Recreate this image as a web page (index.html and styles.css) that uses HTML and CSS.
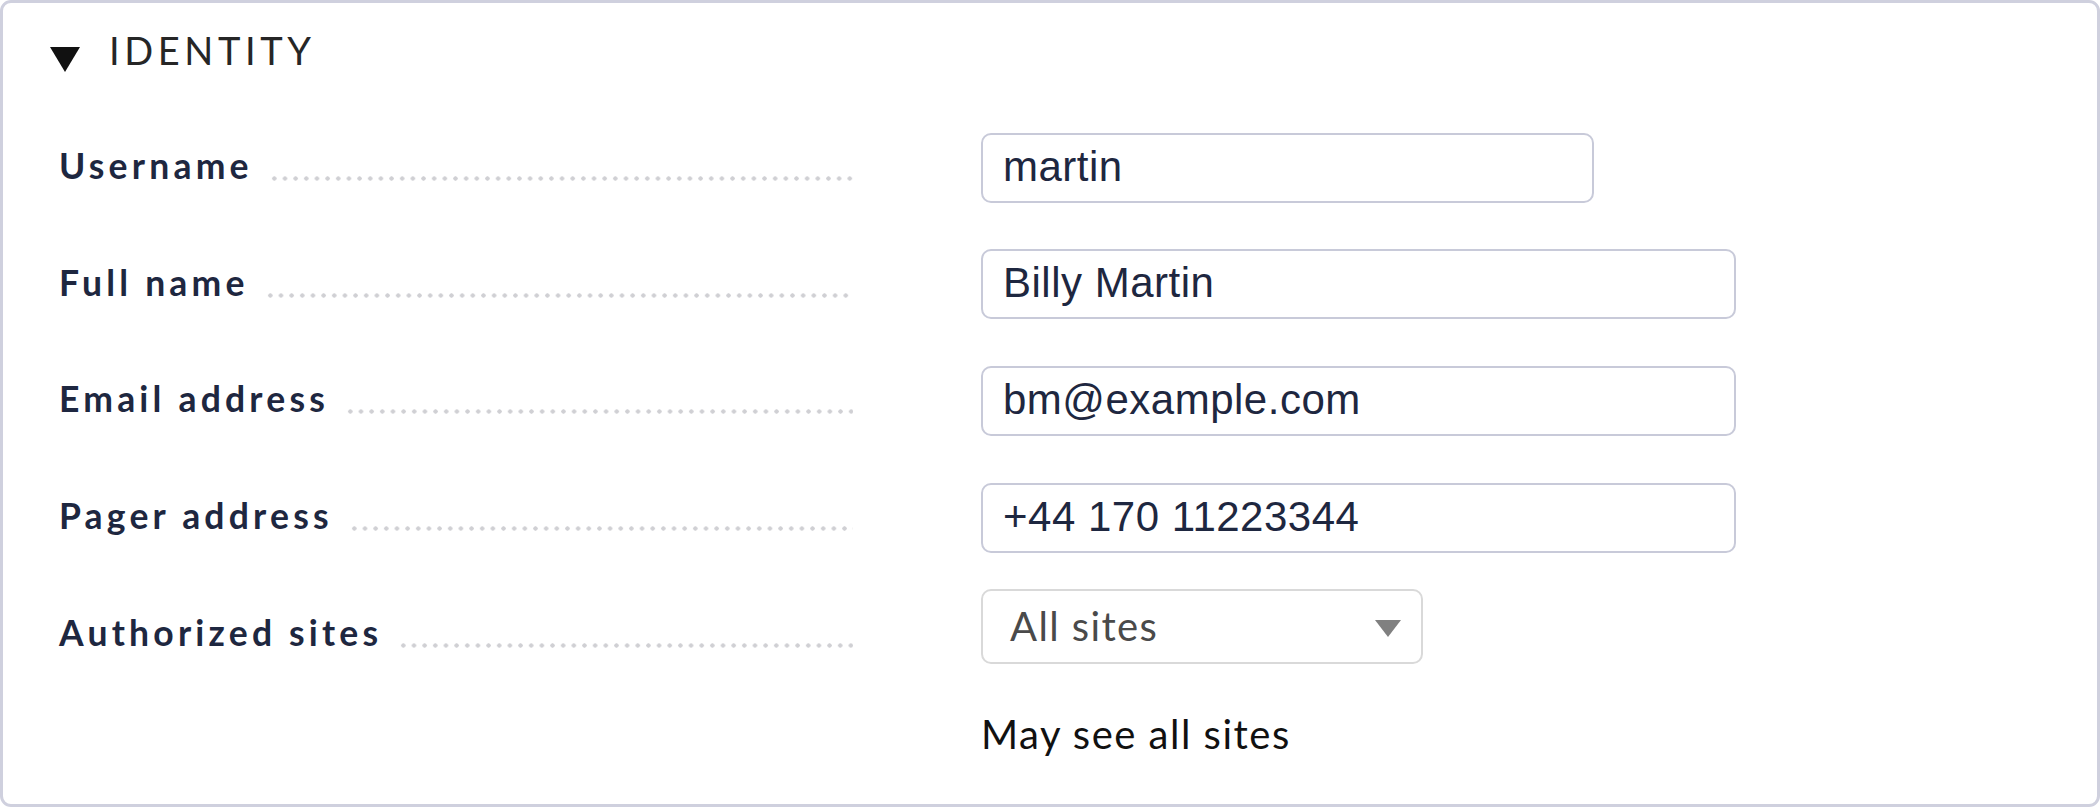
FILE: index.html
```html
<!DOCTYPE html>
<html lang="en">
<head>
<meta charset="utf-8">
<title>Identity</title>
<link rel="stylesheet" href="styles.css">
</head>
<body>
<section class="panel">
  <header class="panel-head">
    <svg class="toggle" width="30" height="25" viewBox="0 0 30 25" aria-hidden="true"><polygon points="0,0 30,0 15,25" fill="#111"/></svg>
    <h2 class="panel-title">IDENTITY</h2>
  </header>
  <div class="form">
    <div class="row">
      <label class="label"><span class="label-text">Username</span><span class="leader"></span></label>
      <input class="field field-short" type="text" value="martin">
    </div>
    <div class="row">
      <label class="label"><span class="label-text">Full name</span><span class="leader"></span></label>
      <input class="field" type="text" value="Billy Martin">
    </div>
    <div class="row">
      <label class="label"><span class="label-text">Email address</span><span class="leader"></span></label>
      <input class="field" type="text" value="bm@example.com">
    </div>
    <div class="row">
      <label class="label"><span class="label-text">Pager address</span><span class="leader"></span></label>
      <input class="field" type="text" value="+44 170 11223344">
    </div>
    <div class="row">
      <label class="label"><span class="label-text">Authorized sites</span><span class="leader"></span></label>
      <div class="value-col">
        <div class="select">
          <span class="select-text">All sites</span>
          <svg class="select-arrow" width="26" height="17" viewBox="0 0 26 17" aria-hidden="true"><polygon points="0,0 26,0 13,17" fill="#808080"/></svg>
        </div>
        <p class="note">May see all sites</p>
      </div>
    </div>
  </div>
</section>
</body>
</html>
```

FILE: styles.css
```css
* { box-sizing: border-box; }

html, body {
  margin: 0;
  padding: 0;
  background: #fff;
}

.panel {
  width: 2100px;
  height: 807px;
  border: 3px solid #cfd0de;
  border-radius: 11px;
  background: #fff;
  overflow: hidden;
}

.panel-head {
  display: flex;
  align-items: flex-start;
  padding: 24.5px 0 0 47px;
}

.toggle {
  margin-top: 19.5px;
  flex: none;
}

.panel-title {
  margin: 0 0 0 29px;
  font-family: Lato, "Liberation Sans", sans-serif;
  font-weight: 400;
  font-size: 38px;
  line-height: 45.6px;
  letter-spacing: 4.6px;
  color: #262626;
}

.form {
  display: flex;
  flex-direction: column;
  gap: 46.67px;
  padding: 59.5px 0 0 56px;
}

.row {
  display: grid;
  grid-template-columns: 794px 1fr;
  column-gap: 128px;
  align-items: start;
}

.label {
  display: flex;
  align-items: flex-end;
  padding-top: 12.5px;
  font-family: Lato, "Liberation Sans", sans-serif;
  font-weight: 700;
  font-size: 35.5px;
  line-height: 42px;
  letter-spacing: 4.2px;
  color: #1e2740;
}

.label-text {
  flex: none;
  white-space: nowrap;
}

.leader {
  flex: 1;
  height: 5px;
  margin: 0 0 6px 16px;
  background-image: radial-gradient(circle, #d0d0d4 1.9px, transparent 2.4px);
  background-size: 10.67px 5px;
  background-repeat: repeat-x;
}

.field {
  display: block;
  width: 755px;
  height: 70px;
  margin: 0;
  padding: 0 19px 2px 20px;
  border: 2px solid #c8cad9;
  border-radius: 10px;
  background: #fff;
  font-family: "Liberation Sans", Arial, sans-serif;
  font-size: 42px;
  letter-spacing: 0.5px;
  color: #1e2740;
  outline: none;
}

.field-short {
  width: 613px;
}

.value-col {
  display: flex;
  flex-direction: column;
  align-items: flex-start;
}

.select {
  display: flex;
  align-items: center;
  justify-content: space-between;
  width: 442px;
  height: 75px;
  margin-top: -10.67px;
  padding: 0 20px 0 27px;
  border: 2px solid #d9d9d9;
  border-radius: 10px;
  background: #fff;
}

.select-text {
  font-family: Lato, "Liberation Sans", sans-serif;
  font-size: 40px;
  line-height: 46px;
  letter-spacing: 1.4px;
  color: #4a4a4a;
}

.select-arrow {
  flex: none;
  margin-top: 4px;
}

.note {
  margin: 46px 0 0 0;
  font-family: Lato, "Liberation Sans", sans-serif;
  font-size: 40px;
  line-height: 48px;
  letter-spacing: 1.5px;
  color: #111;
}
```
